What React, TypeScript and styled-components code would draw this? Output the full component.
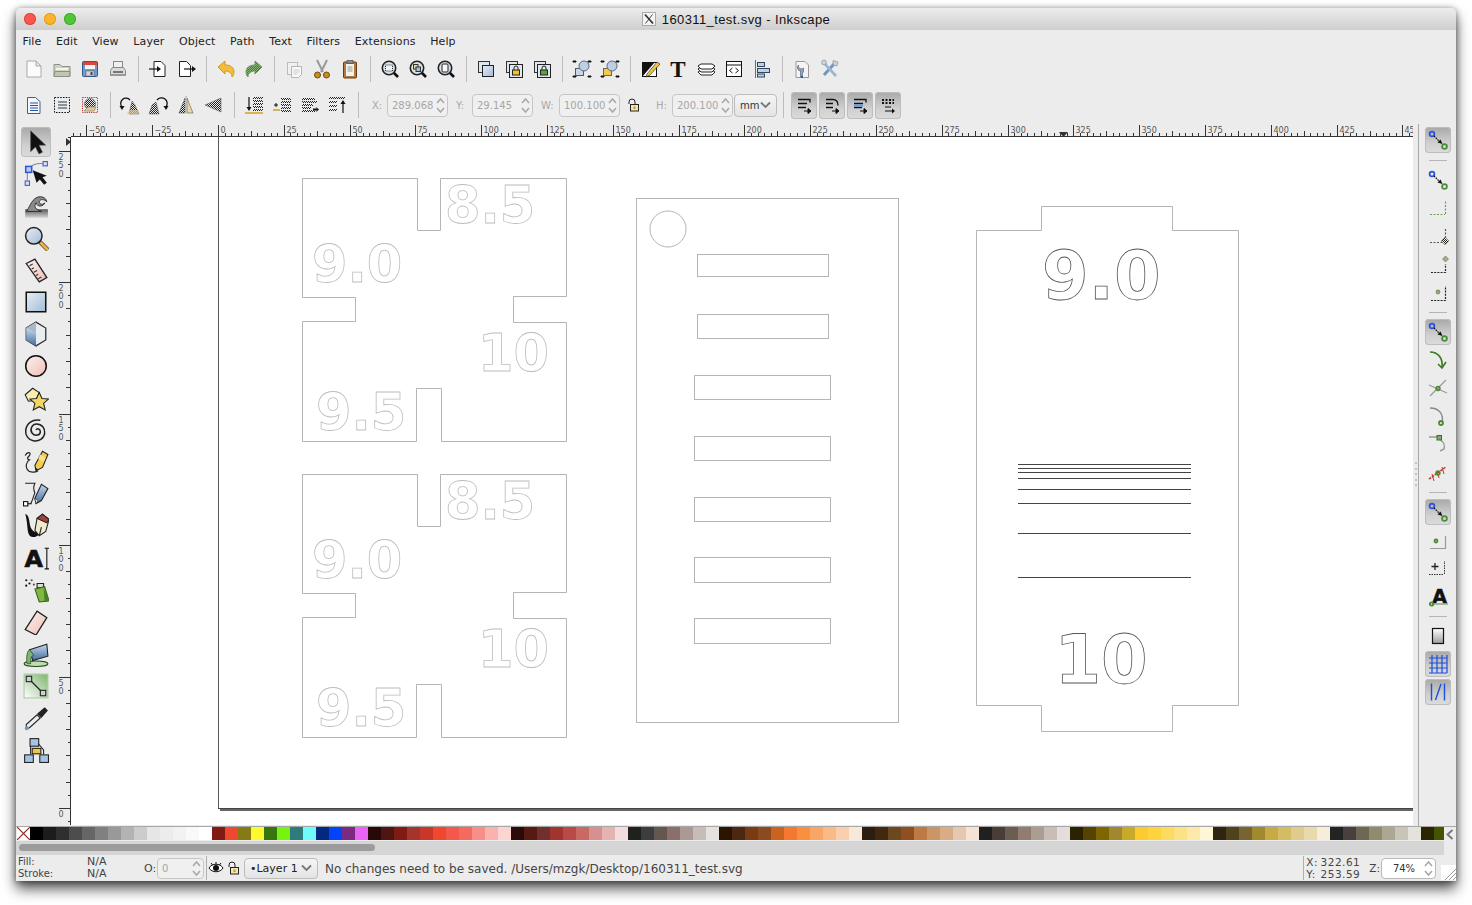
import React from 'react'
import styled, { createGlobalStyle } from 'styled-components'

const GlobalStyle = createGlobalStyle`
  html, body { margin: 0; padding: 0; background: #fff; }
  body { font-family: "DejaVu Sans", sans-serif; min-height: 905px; }
  #root { padding: 8px 0 24px 16px; box-sizing: border-box; height: 905px; }
`

const Window = styled.div`
  width: 1440px;
  height: 873px;
  display: flex;
  flex-direction: column;
  background: #ececec;
  border-radius: 5px 5px 0 0;
  box-shadow: 0 8px 14px rgba(0,0,0,.65), 0 1px 6px rgba(0,0,0,.45);
`

const TitleBar = styled.div`
  height: 22px;
  flex: none;
  display: grid;
  grid-template-columns: 1fr auto 1fr;
  align-items: center;
  border-radius: 5px 5px 0 0;
  background: linear-gradient(#ededed, #cecece);
`

const Lights = styled.div`
  display: flex;
  gap: 8px;
  padding-left: 8px;
`

const Light = styled.span<{ $color: string; $edge: string }>`
  width: 12px;
  height: 12px;
  border-radius: 50%;
  background: ${p => p.$color};
  box-shadow: inset 0 0 0 1px ${p => p.$edge};
`

const Title = styled.div`
  display: flex;
  align-items: center;
  gap: 6px;
  font: 13px "Liberation Sans", sans-serif;
  letter-spacing: .4px;
  color: #111;
`

const MenuBar = styled.div`
  height: 22px;
  flex: none;
  display: flex;
  align-items: center;
  gap: 14.6px;
  padding-left: 6.5px;
  font-size: 11px;
  letter-spacing: .1px;
  color: #222;
`

const ToolRow = styled.div<{ $height: number }>`
  height: ${p => p.$height}px;
  flex: none;
  display: flex;
  align-items: center;
  padding-left: 4px;
`

const ToolButton = styled.div<{ $w?: number; $h?: number; $on?: boolean }>`
  width: ${p => p.$w ?? 28}px;
  height: ${p => p.$h ?? 28}px;
  flex: none;
  display: flex;
  align-items: center;
  justify-content: center;
  border-radius: 4px;
  box-sizing: border-box;
  ${p => p.$on && `
    background: linear-gradient(#a8a8a8, #cfcfcf 60%, #dcdcdc);
    box-shadow: inset 0 0 0 1px #bdbdbd;
  `}
`

const PressedGroup = styled.div`
  display: flex;
  gap: 2px;
  margin-left: 2px;
`

const Separator = styled.div`
  width: 12px;
  height: 26px;
  flex: none;
  display: flex;
  justify-content: center;
  &::after { content: ''; width: 1px; background: #bcbcbc; }
`

const FieldLabel = styled.span<{ $left: number; $w: number }>`
  margin-left: ${p => p.$left}px;
  width: ${p => p.$w}px;
  flex: none;
  font-size: 10px;
  color: #a8a8a8;
`

const Spin = styled.div<{ $w: number; $h?: number; $on?: boolean }>`
  width: ${p => p.$w}px;
  height: ${p => p.$h ?? 23}px;
  flex: none;
  box-sizing: border-box;
  display: flex;
  align-items: center;
  justify-content: space-between;
  border: 1px solid ${p => (p.$on ? '#b9b9b9' : '#c6c6c6')};
  border-radius: 4px;
  background: ${p => (p.$on ? '#fff' : '#f0f0f0')};
  color: ${p => (p.$on ? '#333' : '#a6a6a6')};
  font-size: 10px;
  overflow: hidden;
`

const SpinValue = styled.span<{ $center?: boolean }>`
  padding-left: 4px;
  flex: 1;
  min-width: 0;
  overflow: hidden;
  white-space: nowrap;
  text-align: ${p => (p.$center ? 'center' : 'left')};
`

const SpinArrows = styled.svg`
  flex: none;
`

const Select = styled.div<{ $w: number; $h?: number; $left?: number; $strong?: boolean }>`
  width: ${p => p.$w}px;
  height: ${p => p.$h ?? 23}px;
  margin-left: ${p => p.$left ?? 0}px;
  flex: none;
  box-sizing: border-box;
  display: flex;
  align-items: center;
  justify-content: space-between;
  padding: 0 5px;
  border: 1px solid #bcbcbc;
  border-radius: 4px;
  background: linear-gradient(#f5f5f5, #e4e4e4);
  color: ${p => (p.$strong ? '#222' : '#333')};
  font-size: ${p => (p.$strong ? 11 : 10)}px;
  white-space: nowrap;
`

const Workspace = styled.div`
  flex: 1;
  min-height: 0;
  display: flex;
`

const LeftTools = styled.div`
  width: 42px;
  flex: none;
  display: flex;
  flex-direction: column;
  gap: 2px;
  padding: 3px 0 0 5px;
  box-sizing: border-box;
`

const CanvasArea = styled.div`
  width: 1355px;
  flex: none;
  display: grid;
  grid-template-columns: 13px 1342px;
  grid-template-rows: 13px 688px;
`

const Corner = styled.div``

const Drawing = styled.svg`
  display: block;
`

const PageCanvas = styled(Drawing)`
  background: #fff;
`

const Grip = styled.div`
  width: 5px;
  flex: none;
  display: flex;
  flex-direction: column;
  align-items: center;
  gap: 3.5px;
  padding-top: 338px;
  box-sizing: border-box;
`

const GripDot = styled.span`
  width: 2px;
  height: 2px;
  background: #c4c4c4;
`

const RightTools = styled.div`
  width: 38px;
  flex: none;
  box-sizing: border-box;
  border-left: 1px solid #a9a9a9;
  padding: 2px 0 0 6px;
  display: flex;
  flex-direction: column;
`

const SnapCell = styled.div`
  height: 28px;
  display: flex;
  align-items: center;
`

const SnapRule = styled.div`
  height: 12px;
  width: 18px;
  margin-left: 4px;
  display: flex;
  align-items: center;
  &::after { content: ''; flex: 1; height: 1px; background: #b4b4b4; }
`

const PaletteRow = styled.div`
  height: 15px;
  flex: none;
  display: flex;
  box-sizing: border-box;
  border-top: 1px solid #a8a8a8;
`

const Swatches = styled.div`
  width: 1414px;
  height: 13px;
  display: flex;
  overflow: hidden;
`

const NoPaint = styled.svg`
  flex: none;
  margin-left: 1px;
`

const Swatch = styled.span<{ $color: string }>`
  width: 13px;
  height: 13px;
  flex: none;
  background: ${p => p.$color};
`

const PaletteMore = styled.div`
  flex: 1;
  display: flex;
  align-items: center;
  justify-content: center;
`

const ScrollRow = styled.div`
  height: 14px;
  flex: none;
  display: flex;
`

const ScrollTrack = styled.div`
  width: 1428px;
  box-sizing: border-box;
  padding: 3px 3px;
  background: #d5d5d5;
`

const ScrollThumb = styled.div`
  width: 356px;
  height: 7px;
  border-radius: 4px;
  background: #9c9c9c;
`

const StatusBar = styled.div`
  height: 26px;
  flex: none;
  display: flex;
  align-items: center;
  color: #444;
`

const FillBlock = styled.div`
  width: 128px;
  flex: none;
  padding-left: 2px;
  box-sizing: border-box;
  display: grid;
  grid-template-columns: 69px auto;
  line-height: 12px;
  font-size: 10px;
`

const FillValue = styled.span`
  font-size: 11px;
`

const StatusLabel = styled.span`
  flex: none;
  font-size: 11px;
  width: 13px;
`

const StatusRule = styled.div<{ $left: number }>`
  margin-left: ${p => p.$left}px;
  width: 1px;
  height: 24px;
  flex: none;
  background: #b0b0b0;
`

const StatusIcon = styled.div<{ $left: number }>`
  margin-left: ${p => p.$left}px;
  width: 16px;
  height: 16px;
  flex: none;
`

const Message = styled.div`
  margin: 1px 0 0 7px;
  font-size: 12px;
  white-space: nowrap;
  color: #444;
`

const Coords = styled.div`
  margin-left: auto;
  display: flex;
  align-items: center;
`

const CoordGrid = styled.div`
  margin-left: 2px;
  width: 54px;
  display: grid;
  grid-template-columns: auto 1fr;
  font-size: 10.5px;
  line-height: 12px;
  letter-spacing: .5px;
`

const CoordValue = styled.span`
  text-align: right;
`

const ZoomLabel = styled.span`
  margin: 0 1px 0 9px;
  font-size: 10.5px;
`

const ResizeCorner = styled.svg`
  margin-left: 5px;
  align-self: flex-end;
  flex: none;
  background: #fff;
`

const Outline = styled.text<{ $tone: string }>`
  font-family: "DejaVu Sans", sans-serif;
  font-weight: 700;
  fill: #fff;
  stroke: ${p => p.$tone};
  stroke-width: .8px;
`

const RulerText = styled.text`
  font-family: "DejaVu Sans", sans-serif;
  font-size: 8px;
  fill: #555;
`

const HiddenDefs = styled.svg`
  position: absolute;
  width: 0;
  height: 0;
`

const Defs = () => (
  <HiddenDefs>
    <defs>
      <pattern id="dith" width="2" height="2" patternUnits="userSpaceOnUse">
        <rect width="1" height="1" fill="#222" />
        <rect x="1" y="1" width="1" height="1" fill="#222" />
      </pattern>
      <pattern id="dithGreen" width="2" height="2" patternUnits="userSpaceOnUse">
        <rect width="2" height="2" fill="#8db57a" />
        <rect width="1" height="1" fill="#3f7a35" />
        <rect x="1" y="1" width="1" height="1" fill="#3f7a35" />
      </pattern>
      <linearGradient id="gBlue" x1="0" y1="0" x2="1" y2="1">
        <stop offset="0" stopColor="#e6eef6" />
        <stop offset="1" stopColor="#a3bcd6" />
      </linearGradient>
      <linearGradient id="gDeep" x1="0" y1="0" x2="0" y2="1">
        <stop offset="0" stopColor="#c6d8ea" />
        <stop offset="1" stopColor="#3f6ea3" />
      </linearGradient>
      <linearGradient id="gPink" x1="0" y1="0" x2="1" y2="1">
        <stop offset="0" stopColor="#fbf2f0" />
        <stop offset="1" stopColor="#f0bdb6" />
      </linearGradient>
      <linearGradient id="gGrey" x1="0" y1="0" x2="0" y2="1">
        <stop offset="0" stopColor="#555" />
        <stop offset="1" stopColor="#d8d8d8" />
      </linearGradient>
      <linearGradient id="gGreen" x1="0" y1="1" x2="1" y2="0">
        <stop offset="0" stopColor="#fff" />
        <stop offset="1" stopColor="#7fb56f" />
      </linearGradient>
      <linearGradient id="gPage" x1="0" y1="0" x2="0" y2="1">
        <stop offset="0" stopColor="#fff" />
        <stop offset="1" stopColor="#9c9c9c" />
      </linearGradient>
    </defs>
  </HiddenDefs>
)

const ring = (x: number, y: number, c: string, r = 2.4) => (
  <circle cx={x} cy={y} r={r} fill="none" stroke={c} strokeWidth="1.8" />
)
const GREEN = '#4f8a3a'
const BLUE = '#2a55e0'

const snapMain = (
  <>
    {ring(6, 6, BLUE)}
    {ring(18.5, 18.5, GREEN)}
    <path d="M8 8l5 5" stroke="#111" strokeWidth="1.3" strokeDasharray="1.5 1" />
    <path d="M16.5 16l-5-1.5 3-3z" fill="#111" />
  </>
)

const magnifier = (inner: React.ReactNode) => (
  <>
    <path d="M15.500 15.500l4.500 4.500" stroke="#111" strokeWidth="2.6" />
    <circle cx="11" cy="11" r="6.700" fill="#d6e3ee" stroke="#222" strokeWidth="1.6" />
    {inner}
  </>
)

const bars = (a: number[]) =>
  a.map((y, i) => <rect key={i} x="11" y={y} width="10" height="2" fill="url(#dith)" />)

const stackLines = (extra: React.ReactNode) => (
  <>
    <path d="M6 6.5h12v3M6 10.5h9M6 14.5h8" fill="none" stroke="#111" strokeWidth="1.3" />
    {extra}
    <path d="M12 18h5M16 15.5l3 2.5-3 2.5z" fill="#111" stroke="#111" />
  </>
)

const glyphs: Record<string, React.ReactNode> = {
  new: <path d="M5 4h9l5 5v11H5zM14 4v5h5" fill="#fbfbfb" stroke="#a9a9a9" />,
  open: (
    <>
      <path d="M4 7.5h6l2 2h8v10H4z" fill="#cdd2c2" stroke="#8d9184" />
      <rect x="6" y="11" width="12" height="2" fill="#f4f4ee" />
      <path d="M4 19.5l1-5h15l-.5 5z" fill="#bfc7b0" stroke="#8d9184" />
    </>
  ),
  save: (
    <>
      <rect x="4.5" y="4.5" width="15" height="15" rx="1" fill="#6e9bcb" stroke="#33598f" />
      <rect x="5" y="5" width="14" height="3" fill="#d9483b" />
      <rect x="7" y="8" width="10" height="4" fill="#f6f6f6" />
      <rect x="8" y="14" width="8" height="5" fill="#d6d6d6" stroke="#555" strokeWidth=".5" />
      <rect x="12.5" y="15" width="2" height="3" fill="#444" />
    </>
  ),
  print: (
    <>
      <rect x="7.5" y="4.5" width="9" height="6" fill="#efefef" stroke="#888" />
      <path d="M4.5 18.5v-5l2-3h11l2 3v5z" fill="#dadada" stroke="#888" />
      <rect x="7" y="14" width="10" height="2" fill="#777" />
      <rect x="4.5" y="17" width="15" height="2" fill="#999" />
    </>
  ),
  import: (
    <>
      <path d="M8 4.5h7l4 4v11H8z" fill="#fff" stroke="#222" />
      <path d="M3 12h10" stroke="#111" strokeWidth="1.2" />
      <path d="M11 9l4 3-4 3z" fill="#111" />
    </>
  ),
  export: (
    <>
      <path d="M5.5 4.5h7l4 4v11h-11z" fill="#fff" stroke="#222" />
      <path d="M10 12h9" stroke="#111" strokeWidth="1.2" />
      <path d="M18 9l4 3-4 3z" fill="#111" />
    </>
  ),
  undo: <path d="M4 10l7-6v4c6 0 9 3 9 7 0 2-1 4-2 5 0-4-3-6-7-6v3z" fill="#f5bb3a" stroke="#cf9a1c" strokeLinejoin="round" />,
  redo: <path d="M20 10l-7-6v4c-6 0-9 3-9 7 0 2 1 4 2 5 0-4 3-6 7-6v3z" fill="url(#dithGreen)" stroke="#6f9a5e" strokeLinejoin="round" />,
  duplicate: (
    <>
      <rect x="5.5" y="5.5" width="10" height="12" fill="#f1f1f1" stroke="#bcbcbc" />
      <path d="M9.5 9.5h10v8l-3 3h-7z" fill="#f8f8f8" stroke="#b5b5b5" />
      <path d="M11.5 13h6M11.5 15h6M11.5 17h4" stroke="#ccc" />
    </>
  ),
  cut: (
    <>
      <path d="M7 3l6 12M17 3l-6 12" stroke="#9a9a9a" strokeWidth="2" />
      <circle cx="7.5" cy="18" r="3" fill="#c98d1f" stroke="#6d4c10" />
      <circle cx="16.5" cy="18" r="3" fill="#c98d1f" stroke="#6d4c10" />
    </>
  ),
  paste: (
    <>
      <rect x="5.5" y="5" width="13" height="16" rx="1" fill="#b5793a" stroke="#5f3d16" />
      <rect x="8" y="7" width="8" height="12" fill="#f3f3ee" />
      <rect x="9" y="3.5" width="6" height="3" fill="#888" stroke="#444" strokeWidth=".6" />
      <path d="M9.5 10h5M9.5 12h5M9.5 14h5" stroke="#999" />
    </>
  ),
  zoomSel: magnifier(<rect x="7.500" y="8" width="7" height="6" fill="#f3f3f3" stroke="#222" strokeDasharray="1 1" />),
  zoomDraw: magnifier(
    <>
      <rect x="7.500" y="7.500" width="4.500" height="4.500" fill="#f4d774" stroke="#333" />
      <rect x="10" y="10" width="4.500" height="4.500" fill="#9fc0de" stroke="#333" />
    </>
  ),
  zoomPage: magnifier(<rect x="8" y="7" width="6" height="8" rx="1" fill="#f6f6f6" stroke="#222" />),
  clone: (
    <>
      <rect x="4.5" y="4.5" width="11" height="11" fill="#dbe6f0" stroke="#333" />
      <rect x="8.5" y="8.5" width="11" height="11" fill="url(#gBlue)" stroke="#222" />
    </>
  ),
  cloneLock: (
    <>
      <rect x="4.5" y="4.5" width="11" height="11" fill="#dbe6f0" stroke="#333" />
      <rect x="7.5" y="7.5" width="13" height="13" fill="#dfe8f0" stroke="#222" />
      <path d="M12 13v-2a2 2 0 0 1 4 0v2" fill="none" stroke="#222" />
      <rect x="10.5" y="13" width="7" height="5" fill="#f0c22e" stroke="#222" />
    </>
  ),
  cloneGreen: (
    <>
      <rect x="4.5" y="4.5" width="11" height="11" fill="#dbe6f0" stroke="#333" />
      <rect x="7.5" y="7.5" width="13" height="13" fill="#dfe8f0" stroke="#222" />
      <path d="M12 13v-2a2 2 0 0 1 4 0v2" fill="none" stroke="#222" />
      <rect x="10.5" y="13" width="7" height="5" fill="#5aa43c" stroke="#222" />
    </>
  ),
  group: (
    <>
      <path d="M3 4h3v1H3zM18 4h3v1h-3zM3 19h3v1H3zM18 19h3v1h-3z" fill="#111" stroke="#111" />
      <rect x="5.5" y="11.5" width="8" height="7" fill="#c8d8e8" stroke="#556" />
      <circle cx="14" cy="9" r="5" fill="#bcd0e4" stroke="#667" />
    </>
  ),
  ungroup: (
    <>
      <path d="M3 4h3v1H3zM18 4h3v1h-3zM3 19h3v1H3zM18 19h3v1h-3z" fill="#111" stroke="#111" />
      <rect x="5.5" y="11.5" width="8" height="7" fill="#f2cb4d" stroke="#665" />
      <circle cx="14" cy="9" r="5" fill="#bcd0e4" stroke="#667" />
    </>
  ),
  fillStroke: (
    <>
      <rect x="4.5" y="5.5" width="14" height="14" fill="#fff" stroke="#111" />
      <path d="M4 20V5h13z" fill="#111" />
      <path d="M9 17l10-12 3 2-10 11-4 2z" fill="#f0c64a" stroke="#111" strokeWidth=".6" />
    </>
  ),
  textTool: (
    <text x="12" y="20" textAnchor="middle" fontFamily='"Liberation Serif", serif' fontWeight="700" fontSize="23" fill="#111">T</text>
  ),
  layers: (
    <>
      <path d="M4 15l3-2h11l3 2-3 3H7z" fill="#fff" stroke="#222" />
      <path d="M4 12l3-2h11l3 2-3 3H7z" fill="#f4f4f4" stroke="#222" />
      <path d="M4 9l3-2h11l3 2-3 3H7z" fill="#fff" stroke="#222" />
    </>
  ),
  xml: (
    <>
      <rect x="4.5" y="4.5" width="15" height="15" fill="#fff" stroke="#111" />
      <path d="M4.5 8h15" stroke="#111" />
      <path d="M10.5 11l-3 2.5 3 2.5M13.5 11l3 2.5-3 2.5" fill="none" stroke="#111" />
    </>
  ),
  align: (
    <>
      <path d="M5.5 3v18" stroke="#d5402f" />
      <rect x="7.5" y="5.5" width="7" height="4" fill="#bdd2e6" stroke="#33465c" />
      <rect x="7.5" y="11.5" width="12" height="4" fill="#bdd2e6" stroke="#33465c" />
      <rect x="7.5" y="17" width="7" height="3" fill="#bdd2e6" stroke="#33465c" />
    </>
  ),
  docProps: (
    <>
      <path d="M6 4.5h9l3.5 3.5v12.5H6z" fill="#f4f4f4" stroke="#999" />
      <path d="M8.5 8a3 3 0 0 0 5 3v4l-1 1v4h-2v-6a3.5 3.5 0 0 1-2-6z" fill="#8aa5bd" stroke="#556" strokeWidth=".6" />
      <rect x="11" y="19" width="2" height="2" fill="#2a55b0" />
    </>
  ),
  prefs: (
    <>
      <path d="M6 18l10-11" stroke="#6f97bd" strokeWidth="3" />
      <path d="M6 6l12 13" stroke="#9ab7d1" strokeWidth="2.6" />
      <path d="M15 3.5l5 1.5-1 4-4-1z" fill="#cbd3da" stroke="#789" strokeWidth=".6" />
      <circle cx="6" cy="5.5" r="2.4" fill="#cbd3da" stroke="#789" strokeWidth=".6" />
    </>
  ),
  selAll: (
    <>
      <path d="M5.5 4.5h8l4.5 4v12H5.5z" fill="#f4f7fb" stroke="#3f5f8f" />
      <path d="M8 10h8M8 12.5h8M8 15h8M8 17.5h8" stroke="#2a55a0" />
    </>
  ),
  selLayers: (
    <>
      <rect x="4.5" y="4.5" width="15" height="15" fill="none" stroke="#111" strokeDasharray="1.6 1.2" />
      <path d="M8 9h9M8 12h9M8 15h9" stroke="#444" strokeWidth="2" />
      <path d="M8 9h9M8 12h9M8 15h9" stroke="#cfe0ee" />
    </>
  ),
  selInvert: (
    <>
      <rect x="4.5" y="4.5" width="15" height="15" fill="none" stroke="#b7362b" strokeDasharray="1.2 1" />
      <circle cx="12" cy="11" r="5.5" fill="url(#dith)" stroke="#888" />
      <path d="M6 18l4-4h8l-2 4z" fill="#e6c98d" stroke="#998" />
    </>
  ),
  rotCcw: (
    <>
      <path d="M11 21l3-13 3 4 4 9z" fill="url(#dith)" stroke="#555" strokeWidth=".5" />
      <path d="M4 14a5 5 0 0 1 8-7" fill="none" stroke="#111" strokeWidth="1.3" />
      <path d="M1.5 13h5l-2.5 4z" fill="#111" />
      <path d="M8 21l5-4h6l2 4z" fill="#e3c590" opacity=".7" />
    </>
  ),
  rotCw: (
    <>
      <path d="M3 21l3-9 4-3 3 12z" fill="url(#dith)" stroke="#555" strokeWidth=".5" />
      <path d="M20 14a5 5 0 0 0-9-7" fill="none" stroke="#111" strokeWidth="1.3" />
      <path d="M17.5 13h5L20 17z" fill="#111" />
    </>
  ),
  flipH: (
    <>
      <path d="M11 5L5 20h6z" fill="url(#dith)" stroke="#444" strokeWidth=".5" />
      <path d="M13 5l6 15h-6z" fill="#ead5a4" stroke="#444" strokeWidth=".5" />
      <path d="M12 3v18" stroke="#999" strokeDasharray="1.5 1" />
    </>
  ),
  flipV: <path d="M3 12l16-7v14z" fill="url(#dith)" stroke="#666" strokeWidth=".6" />,
  raiseTop: (
    <>
      <path d="M7 4v12" stroke="#111" strokeWidth="1.2" />
      <path d="M4.5 14h5L7 18z" fill="#111" />
      <path d="M3 20h18" stroke="#d7a92a" strokeWidth="1.6" />
      {bars([4, 7, 10, 13, 16])}
    </>
  ),
  raise: (
    <>
      <path d="M4 12h4M6 10v4" stroke="#111" />
      <path d="M3 17h7" stroke="#c9a02c" strokeWidth="1.5" />
      {bars([5, 8, 11, 14, 17])}
    </>
  ),
  lower: (
    <>
      <rect x="4" y="5" width="13" height="2" fill="url(#dith)" />
      <rect x="4" y="8" width="15" height="2" fill="url(#dith)" />
      <rect x="4" y="11" width="11" height="2" fill="url(#dith)" />
      <rect x="4" y="14" width="9" height="2" fill="url(#dith)" />
      <rect x="4" y="17" width="13" height="2" fill="url(#dith)" />
      <path d="M15 15.5h4l-1.5-2 3.5 3-3.5 3 1.5-2h-4z" fill="#111" />
    </>
  ),
  lowerBottom: (
    <>
      <rect x="3" y="4" width="16" height="2" fill="url(#dith)" />
      <rect x="3" y="8" width="8" height="2" fill="url(#dith)" />
      <rect x="3" y="12" width="8" height="2" fill="url(#dith)" />
      <rect x="3" y="16" width="8" height="2" fill="url(#dith)" />
      <path d="M17 20V9" stroke="#111" strokeWidth="1.2" />
      <path d="M14.5 11h5L17 7z" fill="#111" />
    </>
  ),
  stack1: stackLines(null),
  stack2: (
    <>
      <path d="M6 6.5h7c4 0 5 3 5 6M6 10.5h7M6 14.5h7" fill="none" stroke="#111" strokeWidth="1.3" />
      <path d="M12 18h5M16 15.5l3 2.5-3 2.5z" fill="#111" stroke="#111" />
    </>
  ),
  stack3: stackLines(<rect x="6" y="11" width="9" height="3" fill="#7a9cc4" />),
  stack4: (
    <>
      <path d="M6 7h12M6 10h12" stroke="#111" strokeWidth="2" strokeDasharray="2 1.5" />
      <path d="M9 14h6M9 18h8" stroke="#111" strokeWidth="1.2" />
      <path d="M16 15.5l3 2.5-3 2.5z" fill="#111" />
    </>
  ),
  select: <path d="M7 1.5V21l4.5-4.5 3.2 6.5 3.3-1.6-3.2-6.5H21z" fill="#111" stroke="#555" strokeWidth=".5" />,
  node: (
    <>
      <path d="M7 6C9 3 14 2 19 2.500" fill="none" stroke="#888" />
      <path d="M4 11v7" stroke="#888" />
      <rect x="2.5" y="5" width="5.500" height="5.500" fill="#b9c9f2" stroke="#2a55e0" strokeWidth="1.4" />
      <rect x="18.5" y="0.5" width="4" height="4" fill="#dde" stroke="#3a5fd0" />
      <rect x="2" y="18.5" width="4" height="4" fill="#dde" stroke="#3a5fd0" />
      <path d="M9 8.500l13 5-4 1.500 4 5-2.500 2-4-5-3 3z" fill="#111" />
    </>
  ),
  tweak: (
    <>
      <rect x="2" y="15" width="21" height="8" fill="url(#gGrey)" />
      <path d="M3 17c3-3 4-10 10-13 4-1.500 8 0 9 4-2-2-6-3-7 0 0 3 4 3 5 1-1 4-7 4-8 0-2 3-1 6 5 8H3z" fill="#8a8a8a" stroke="#222" strokeWidth=".8" />
    </>
  ),
  zoom: (
    <>
      <path d="M15 15l8 8" stroke="#444" strokeWidth="4" />
      <path d="M16 16l7 7" stroke="#f2b33a" strokeWidth="2.6" />
      <circle cx="10" cy="10" r="7.6" fill="url(#gBlue)" stroke="#222" strokeWidth="1.4" />
    </>
  ),
  measure: (
    <>
      <path d="M3 6l8-4 11 17-7 4z" fill="url(#gPink)" stroke="#222" strokeWidth="1.2" />
      <path d="M6 8l3-1.500M8 11l2-1M10 14l3-1.500M12 17l2-1M14 20l3-1.500" stroke="#333" />
    </>
  ),
  rect: <rect x="3" y="3" width="18" height="18" fill="url(#gBlue)" stroke="#111" strokeWidth="1.4" />,
  box3d: (
    <>
      <path d="M12 1l9 5.500v11L12 23l-9-5.500v-11z" fill="#e8edf2" stroke="#333" strokeWidth="1.2" />
      <path d="M12 1v11L3 6.500z" fill="#a9b9cc" />
      <path d="M3 6.500l9 5.500v11l-9-5.500z" fill="url(#gDeep)" />
    </>
  ),
  circle: <circle cx="12" cy="12" r="9.500" fill="url(#gPink)" stroke="#111" strokeWidth="1.4" />,
  star: (
    <>
      <path d="M2 9l7-6 6 4-3 7-7 1z" fill="#f9eeb0" stroke="#222" />
      <path d="M15 7l2.500 5.500 6 .5-4.500 4 1.500 6-5.500-3-5.500 3 1.500-6-4.500-4 6-.5z" fill="#f2d860" stroke="#222" />
    </>
  ),
  spiral: <path d="M12 12c1-2 4-1 4 1.500 0 3.500-5 4.500-7.500 1.500C6 12 8 6.500 12.500 6.500c5 0 8 4 7.500 8.500-.5 5-5.500 8-10.500 7C5 21 2 17 2.500 12.500 3 6 9 1.500 16 3" fill="none" stroke="#222" strokeWidth="1.4" />,
  pencil: (
    <>
      <path d="M2 6c2-4 6-3 4 0-2 2-3 3 0 4-3 2-4 6-2 9 2 3 7 3 10 1" fill="none" stroke="#222" strokeWidth="1.1" />
      <path d="M11 15l7-13 5 3-5 12-6 3z" fill="#f3cd4d" stroke="#222" />
      <path d="M16 5l5 3-2 4-5-3z" fill="#f9e08a" />
      <path d="M11.500 17l.5 3 2-1z" fill="#222" />
    </>
  ),
  pen: (
    <>
      <path d="M2 2h9c-2 4-1 7 0 9-2 4-2 7-4 10" fill="none" stroke="#222" />
      <rect x="0.500" y="19" width="4" height="4" fill="#fff" stroke="#111" />
      <path d="M4 21h4" stroke="#111" />
      <path d="M11 16l6-13 6 4-6 11-5 3z" fill="url(#gDeep)" stroke="#222" />
      <path d="M11 16l3 2-2 3z" fill="#e9e0c4" stroke="#222" strokeWidth=".5" />
    </>
  ),
  callig: (
    <>
      <path d="M2 1c5 1 3 10 6 14 2 3 6 3 9 3-3 2-4 5-9 4C3 21 5 10 2 1z" fill="#111" />
      <path d="M11 16l2-11 5-4 6 5-3 11-6 4z" fill="#f2ead0" stroke="#222" />
      <path d="M13 5l5-4 6 5-2 3z" fill="#a4413a" stroke="#222" />
      <path d="M15 21l2-8" stroke="#222" />
    </>
  ),
  text: (
    <>
      <text x="10" y="20" textAnchor="middle" fontFamily='"DejaVu Sans", sans-serif' fontWeight="700" fontSize="22" fill="#111" stroke="#111" strokeWidth=".6">A</text>
      <path d="M20 3h4M22 3v19M20 22h4" stroke="#111" />
    </>
  ),
  spray: (
    <>
      <circle cx="3" cy="3" r="1" fill="#111" /><circle cx="6" cy="6" r="1" fill="#111" />
      <circle cx="8" cy="3" r="1" fill="#555" /><circle cx="3" cy="8" r="1" fill="#111" />
      <circle cx="10" cy="7" r="1" fill="#555" />
      <path d="M13 6h6v4h-6z" fill="#ddd" stroke="#222" />
      <path d="M11 11l9-2 4 13-9 1z" fill="#7fb93f" stroke="#3d5f22" />
      <path d="M19 10l5 12-4 1z" fill="#4a7f26" />
    </>
  ),
  eraser: <path d="M2 19L13 2l9 6-10 16z" fill="url(#gPink)" stroke="#222" strokeWidth="1.2" />,
  bucket: (
    <>
      <ellipse cx="12" cy="21" rx="11" ry="2.500" fill="#bfdcae" stroke="#24481c" />
      <path d="M6 8l16-5 1 11-14 4z" fill="url(#gDeep)" stroke="#222" />
      <path d="M6 8c-3 2-3 10-2 13h3c0-4 0-7 3-8z" fill="#7fb56f" stroke="#24481c" strokeWidth=".7" />
    </>
  ),
  gradient: (
    <>
      <rect x="1" y="1" width="22" height="22" fill="url(#gGreen)" stroke="#a9cfa0" />
      <path d="M6 6l12 12" stroke="#222" strokeWidth="1.2" />
      <rect x="3" y="3" width="5" height="5" fill="#cfcfcf" stroke="#222" />
      <rect x="16" y="16" width="5" height="5" fill="#cfcfcf" stroke="#222" />
    </>
  ),
  dropper: (
    <>
      <path d="M3 18L13 9l3 3-10 9-3 1z" fill="#e9eef2" stroke="#222" />
      <path d="M13 8l7-6 3 3-6 7z" fill="#222" />
      <circle cx="3.500" cy="21.500" r="1.800" fill="#7f93a8" />
    </>
  ),
  connector: (
    <>
      <path d="M9 6h5l5 6v4M9 6L7 9v7" fill="none" stroke="#222" />
      <rect x="6.500" y="1.500" width="8" height="7" fill="#a5c4e2" stroke="#222" />
      <rect x="8.500" y="10.500" width="8" height="5" fill="#f3c73b" stroke="#222" />
      <rect x="1.500" y="16.500" width="8" height="7" fill="#a5c4e2" stroke="#222" />
      <rect x="15.500" y="16.500" width="8" height="7" fill="#a5c4e2" stroke="#222" />
    </>
  ),
  snapMain,
  snapBBox: <path d="M4 18.500h15M19.500 18V5" fill="none" stroke="#6f9a5a" strokeWidth="1.200" strokeDasharray="2 1.500" />,
  snapEdge: (
    <>
      <path d="M4 18.500h12M19.500 14V5" fill="none" stroke="#555" strokeWidth="1.200" strokeDasharray="2 1.500" />
      <path d="M19 13l4 4-4 4-4-4z" fill="url(#dith)" stroke="#6f9a5a" strokeWidth=".6" />
    </>
  ),
  snapCorner: (
    <>
      <path d="M5 20.500h14.500V12" fill="none" stroke="#222" strokeWidth="1.200" strokeDasharray="2 1.200" />
      <path d="M19.500 4l3 3-3 3-3-3z" fill="#9ab57f" stroke="#666" strokeWidth=".6" />
    </>
  ),
  snapMid: (
    <>
      <path d="M5 20.500h14.500V6" fill="none" stroke="#222" strokeWidth="1.200" strokeDasharray="2 1.200" />
      {ring(12, 12, '#7f9a5f', 1.500)}
    </>
  ),
  snapPath: (
    <>
      <path d="M4 4c8 0 13 6 12 15" fill="none" stroke="#3f7a22" strokeWidth="1.600" />
      <path d="M12 16l4 4 4-6" fill="none" stroke="#3f7a22" strokeWidth="1.600" />
    </>
  ),
  snapCross: (
    <>
      <path d="M4 20L20 4M3 9l18 8" stroke="#999" strokeWidth="1.200" />
      {ring(12, 12.500, GREEN, 1.800)}
    </>
  ),
  snapCurve: (
    <>
      <path d="M4 4c9 0 14 6 12 15" fill="none" stroke="#888" strokeWidth="1.400" />
      {ring(15, 19, GREEN, 2)}
    </>
  ),
  snapCusp: (
    <>
      <path d="M3 5h10c1 5 7 4 5 12l-4 2" fill="none" stroke="#999" strokeWidth="1.400" />
      <rect x="11" y="3.500" width="4.500" height="4.500" fill="#7fae5f" stroke="#3f6a2f" />
    </>
  ),
  snapHatch: (
    <>
      <path d="M3 19l17-12" stroke="#c23a2c" strokeWidth="1.600" strokeDasharray="2.500 1" />
      <path d="M6 14l2 7M11 11l2 7M16 7l2 7" stroke="#c23a2c" />
      {ring(12, 13, GREEN, 1.800)}
    </>
  ),
  snapBox: (
    <>
      <path d="M4 20.500h15.500V8" fill="none" stroke="#999" strokeWidth="1.200" />
      {ring(10, 13, GREEN, 1.500)}
    </>
  ),
  snapPlus: (
    <>
      <path d="M9 7v7M5.500 10.500h7" stroke="#222" strokeWidth="1.300" />
      <path d="M3 18.500h15M18.500 18V5" fill="none" stroke="#333" strokeDasharray="1.500 1" />
    </>
  ),
  snapText: (
    <>
      <text x="13.500" y="19" textAnchor="middle" fontFamily='"DejaVu Sans", sans-serif' fontWeight="700" fontSize="19" fill="#111" stroke="#111" strokeWidth=".5">A</text>
      <path d="M6 20h16" stroke="#5f8a40" />
      {ring(5.500, 20, GREEN, 1.700)}
    </>
  ),
  snapPage: <rect x="6.500" y="4.500" width="11" height="15" fill="url(#gPage)" stroke="#111" strokeWidth="1.200" />,
  snapGrid: <path d="M6 3v18M11 3v18M16 3v18M3 6h18M3 11h18M3 16h18M21 3v18M3 21h18" stroke="#1a4fe0" strokeWidth="1.200" fill="none" />,
  snapGuide: <path d="M5.500 3.500v17M18.500 3.500v17M15 4L9.500 20" stroke="#1a4fe0" strokeWidth="1.400" fill="none" />,
  eye: (
    <>
      <path d="M1 8c3-5 11-5 14 0-3 5-11 5-14 0z" fill="#fff" stroke="#111" />
      <circle cx="8" cy="8" r="3" fill="#111" />
      <path d="M3 3l1.500 2M8 2v2M13 3l-1.500 2" stroke="#111" />
    </>
  ),
  lock: (
    <>
      <path d="M3 7V5a3 3 0 0 1 6 0v2" fill="none" stroke="#222" />
      <rect x="4.500" y="7.500" width="8" height="6.500" fill="#f3e7b0" stroke="#222" />
      <rect x="7.500" y="9.500" width="2" height="2.500" fill="#c79a18" />
    </>
  )
}

const Icon: React.FC<{ name: string; size?: number }> = ({ name, size = 24 }) => (
  <svg width={size} height={size} viewBox={size === 16 ? '0 0 16 16' : '0 0 24 24'}>
    {glyphs[name]}
  </svg>
)

const Arrows = () => (
  <SpinArrows width="13" height="21" viewBox="0 0 13 21">
    <path d="M3 8l3.500-4 3.500 4M3 13l3.500 4 3.500-4" fill="none" stroke="#a9a9a9" strokeWidth="1.600" />
  </SpinArrows>
)

const Chevron = () => (
  <svg width="11" height="8" viewBox="0 0 11 8">
    <path d="M1 1.500l4.500 4.500 4.500-4.500" fill="none" stroke="#777" strokeWidth="1.800" />
  </svg>
)

const menus = ['File', 'Edit', 'View', 'Layer', 'Object', 'Path', 'Text', 'Filters', 'Extensions', 'Help']

const topTools = ['new', 'open', 'save', 'print', '|', 'import', 'export', '|', 'undo', 'redo', '|', 'duplicate', 'cut', 'paste', '|',
  'zoomSel', 'zoomDraw', 'zoomPage', '|', 'clone', 'cloneLock', 'cloneGreen', '|', 'group', 'ungroup', '|',
  'fillStroke', 'textTool', 'layers', 'xml', 'align', '|', 'docProps', 'prefs']

const selectTools = ['selAll', 'selLayers', 'selInvert', '|', 'rotCcw', 'rotCw', 'flipH', 'flipV', '|', 'raiseTop', 'raise', 'lower', 'lowerBottom', '|']

const sideTools = ['select', 'node', 'tweak', 'zoom', 'measure', 'rect', 'box3d', 'circle', 'star', 'spiral', 'pencil', 'pen', 'callig',
  'text', 'spray', 'eraser', 'bucket', 'gradient', 'dropper', 'connector']

const snapTools = ['*snapMain', '-', 'snapMain', 'snapBBox', 'snapEdge', 'snapCorner', 'snapMid', '-', '*snapMain', 'snapPath', 'snapCross', 'snapCurve',
  'snapCusp', 'snapHatch', '-', '*snapMain', 'snapBox', 'snapPlus', 'snapText', '-', 'snapPage', '*snapGrid', '*snapGuide']

const palette = ['#000000', '#1c1c1c', '#2c3033', '#4d4d4d', '#666666', '#808080', '#999999', '#b3b3b3', '#cccccc', '#e6e6e6', '#ececec', '#f2f2f2', '#f9f9f9', '#ffffff',
  '#801a12', '#f0472f', '#857a14', '#fdf92d', '#37760d', '#77f310', '#2f7a7c', '#6ffbfb', '#04277f', '#0045fb', '#7a2a80', '#ea62f6',
  '#280808', '#4d1610', '#801a12', '#a3352a', '#c8382a', '#f0472f', '#f4584a', '#f46a5e', '#f78f88', '#f8b3ae', '#fcd5d3',
  '#2b0a0a', '#551a12', '#722f2f', '#a0342e', '#b94a45', '#c96a62', '#d79090', '#e6b3b3', '#f2dcdc',
  '#20201e', '#3d3d3d', '#645750', '#8b6f6b', '#ac9895', '#c8bcb8', '#e6e3df',
  '#2b1500', '#4d2810', '#7a3a14', '#8c4a20', '#c86420', '#f47830', '#f89040', '#f8a565', '#f9ba88', '#fbcfae', '#f6e9d9',
  '#2b1e10', '#42280f', '#6d481f', '#8f4f20', '#bd7a43', '#cc9565', '#d9ac85', '#e6c8b0', '#f5e4d6',
  '#20201e', '#483e37', '#6c5d53', '#917c6f', '#ac9d93', '#c8beb7', '#e3dedb',
  '#2b2200', '#554400', '#806600', '#a08830', '#c8a92a', '#fccb2f', '#fdd33f', '#fddb60', '#fde285', '#fdeaaa', '#fff6d5',
  '#2e2410', '#50431c', '#786431', '#a08a30', '#c8aa44', '#d4bc64', '#dfcc8c', '#e9daae', '#f8ecdb',
  '#232323', '#48403c', '#6c6853', '#918a6f', '#aca793', '#c8c4b7', '#e3e2db',
  '#2b2500', '#445500']

const HorizontalRuler = () => {
  const ticks = []
  for (let i = -22; i <= 182; i++) {
    const x = Math.round(218 + i * 6.58) + 0.5
    const major = i % 10 === 0
    const mid = i % 5 === 0
    ticks.push(<path key={i} d={`M${x} ${major ? 125 : mid ? 131 : 133}V136`} stroke="#333" />)
    if (major) {
      ticks.push(
        <RulerText key={`l${i}`} x={x + 2} y={133}>
          {i < 0 ? `\u2212${-i * 2.5}` : i * 2.5}
        </RulerText>
      )
    }
  }
  return (
    <Drawing width="1342" height="13" viewBox="71 124 1342 13">
      <path d="M71 136.500H1413" stroke="#333" />
      {ticks}
      <path d="M1059 132h9l-4.500 5z" fill="#333" />
    </Drawing>
  )
}

const VerticalRuler = () => {
  const ticks = []
  for (let k = -1; k <= 51; k++) {
    const y = Math.round(808 - k * 13.15) + 0.5
    const major = k % 10 === 0
    ticks.push(<path key={k} d={`M${major ? 59 : k % 2 === 0 ? 66 : 68} ${y}H70`} stroke="#333" />)
    if (major) {
      String(k * 5).split('').forEach((d, i) => {
        ticks.push(<RulerText key={`${k}-${i}`} x={61} y={y + 8 + i * 8.5} textAnchor="middle">{d}</RulerText>)
      })
    }
  }
  return (
    <Drawing width="13" height="688" viewBox="58 137 13 688">
      <path d="M70.500 137V825" stroke="#333" />
      {ticks}
      <path d="M66 138l5 4-5 4z" fill="#333" />
    </Drawing>
  )
}

const Tag: React.FC<{ dy: number }> = ({ dy }) => (
  <g transform={`translate(0 ${dy})`}>
    <path
      d="M302.500 178.500H417.500V230.500H440.500V178.500H566.500V296.500H513.500V322.500H566.500V441.500H441.500V388.500H416.500V441.500H302.500V321.500H355.500V297.500H302.500Z"
      fill="none"
      stroke="#b5b5b5"
    />
    <Outline $tone="#bdbdbd" x="445" y="223" fontSize="51">8.5</Outline>
    <Outline $tone="#bdbdbd" x="312" y="282" fontSize="51">9.0</Outline>
    <Outline $tone="#bdbdbd" x="478" y="371" fontSize="51">10</Outline>
    <Outline $tone="#bdbdbd" x="316" y="430" fontSize="51">9.5</Outline>
  </g>
)

const slots = [[697, 254, 132, 23], [697, 314, 132, 25], [694, 375, 137, 25], [694, 436, 137, 25], [694, 497, 137, 25], [694, 557, 137, 26], [694, 618, 137, 26]]
const rules = [464.5, 468.5, 472.5, 478.5, 489.5, 503.5, 533.5, 577.5]

const PageDrawing = () => (
  <PageCanvas width="1342" height="688" viewBox="71 137 1342 688">
    <path d="M218.500 137V809" stroke="#555" fill="none" />
    <rect x="220" y="808" width="1193" height="3" fill="#666" />
    <path d="M218 808.500H1413" stroke="#444" />
    <Tag dy={0} />
    <Tag dy={296} />
    <rect x="636.500" y="198.500" width="262" height="524" fill="none" stroke="#b5b5b5" />
    <circle cx="668" cy="229" r="18" fill="none" stroke="#b5b5b5" />
    {slots.map(([x, y, w, h]) => (
      <rect key={y} x={x + 0.5} y={y + 0.5} width={w - 1} height={h - 1} fill="none" stroke="#b5b5b5" />
    ))}
    <path
      d="M976.500 230.500H1041.500V206.500H1172.500V230.500H1238.500V705.500H1172.500V731.500H1041.500V705.500H976.500Z"
      fill="none"
      stroke="#b5b5b5"
    />
    <Outline $tone="#555" x="1042" y="299" fontSize="67">9.0</Outline>
    <Outline $tone="#555" x="1054.500" y="683" fontSize="67">10</Outline>
    {rules.map(y => (
      <path key={y} d={`M1018 ${y}H1191`} stroke="#444" />
    ))}
  </PageCanvas>
)

const renderRow = (items: string[]) =>
  items.map((name, i) =>
    name === '|' ? (
      <Separator key={i} />
    ) : (
      <ToolButton key={i}>
        <Icon name={name} />
      </ToolButton>
    )
  )

const Field: React.FC<{ label: string; labelW: number; value: string }> = ({ label, labelW, value }) => (
  <>
    <FieldLabel $left={8} $w={labelW}>{label}</FieldLabel>
    <Spin $w={61}>
      <SpinValue>{value}</SpinValue>
      <Arrows />
    </Spin>
  </>
)

export default function App() {
  return (
    <>
      <GlobalStyle />
      <Defs />
      <Window>
        <TitleBar>
          <Lights>
            <Light $color="#f9564f" $edge="#e0443e" />
            <Light $color="#fcb42a" $edge="#e09e1a" />
            <Light $color="#4fc636" $edge="#3eae2a" />
          </Lights>
          <Title>
            <svg width="14" height="14" viewBox="0 0 14 14">
              <rect x=".5" y=".5" width="13" height="13" fill="#f4f4f4" stroke="#aaa" />
              <path d="M10.500 2.500l-7 9" stroke="#333" strokeWidth=".9" />
              <path d="M3 2.500l8 9" stroke="#333" strokeWidth="1.800" />
            </svg>
            160311_test.svg - Inkscape
          </Title>
          <span />
        </TitleBar>

        <MenuBar>
          {menus.map(m => (
            <span key={m}>{m}</span>
          ))}
        </MenuBar>

        <ToolRow $height={34}>{renderRow(topTools)}</ToolRow>

        <ToolRow $height={38}>
          {renderRow(selectTools)}
          <Field label="X:" labelW={15} value="289.068" />
          <Field label="Y:" labelW={16} value="29.145" />
          <Field label="W:" labelW={18} value="100.100" />
          <ToolButton $w={28}>
            <Icon name="lock" size={16} />
          </ToolButton>
          <FieldLabel $left={8} $w={16}>H:</FieldLabel>
          <Spin $w={61}>
            <SpinValue>200.100</SpinValue>
            <Arrows />
          </Spin>
          <Select $w={43} $left={1}>
            mm
            <Chevron />
          </Select>
          <Separator />
          <PressedGroup>
            {['stack1', 'stack2', 'stack3', 'stack4'].map(name => (
              <ToolButton key={name} $w={26} $h={27} $on>
                <Icon name={name} />
              </ToolButton>
            ))}
          </PressedGroup>
        </ToolRow>

        <Workspace>
          <LeftTools>
            {sideTools.map((name, i) => (
              <ToolButton key={name} $w={30} $h={30} $on={i === 0}>
                <Icon name={name} size={26} />
              </ToolButton>
            ))}
          </LeftTools>
          <CanvasArea>
            <Corner />
            <HorizontalRuler />
            <VerticalRuler />
            <PageDrawing />
          </CanvasArea>
          <Grip>
            {[0, 1, 2, 3, 4].map(i => (
              <GripDot key={i} />
            ))}
          </Grip>
          <RightTools>
            {snapTools.map((name, i) =>
              name === '-' ? (
                <SnapRule key={i} />
              ) : (
                <SnapCell key={i}>
                  <ToolButton $w={26} $h={26} $on={name[0] === '*'}>
                    <Icon name={name.replace('*', '')} />
                  </ToolButton>
                </SnapCell>
              )
            )}
          </RightTools>
        </Workspace>

        <PaletteRow>
          <NoPaint width="13" height="13" viewBox="0 0 13 13">
            <rect width="13" height="13" fill="#fff" />
            <path d="M0 0l13 13M13 0L0 13" stroke="#8a2a20" strokeWidth="1.200" />
          </NoPaint>
          <Swatches>
            {palette.map((c, i) => (
              <Swatch key={i} $color={c} />
            ))}
          </Swatches>
          <PaletteMore>
            <svg width="8" height="11" viewBox="0 0 8 11">
              <path d="M6.500 1L1.500 5.500l5 4.500" fill="none" stroke="#777" strokeWidth="1.800" />
            </svg>
          </PaletteMore>
        </PaletteRow>

        <ScrollRow>
          <ScrollTrack>
            <ScrollThumb />
          </ScrollTrack>
        </ScrollRow>

        <StatusBar>
          <FillBlock>
            <span>Fill:</span>
            <FillValue>N/A</FillValue>
            <span>Stroke:</span>
            <FillValue>N/A</FillValue>
          </FillBlock>
          <StatusLabel>O:</StatusLabel>
          <Spin $w={47} $h={21}>
            <SpinValue>0</SpinValue>
            <Arrows />
          </Spin>
          <StatusRule $left={2} />
          <StatusIcon $left={1}>
            <Icon name="eye" size={16} />
          </StatusIcon>
          <StatusIcon $left={2}>
            <Icon name="lock" size={16} />
          </StatusIcon>
          <Select $w={74} $h={21} $left={2} $strong>
            •Layer 1
            <Chevron />
          </Select>
          <Message>No changes need to be saved. /Users/mzgk/Desktop/160311_test.svg</Message>
          <Coords>
            <StatusRule $left={0} />
            <CoordGrid>
              <span>X:</span>
              <CoordValue>322.61</CoordValue>
              <span>Y:</span>
              <CoordValue>253.59</CoordValue>
            </CoordGrid>
            <ZoomLabel>Z:</ZoomLabel>
            <Spin $w={55} $h={21} $on>
              <SpinValue $center>74%</SpinValue>
              <Arrows />
            </Spin>
            <ResizeCorner width="15" height="15" viewBox="0 0 15 15">
              <path d="M4 15L15 4M8 15l7-7M12 15l3-3" stroke="#999" />
            </ResizeCorner>
          </Coords>
        </StatusBar>
      </Window>
    </>
  )
}
